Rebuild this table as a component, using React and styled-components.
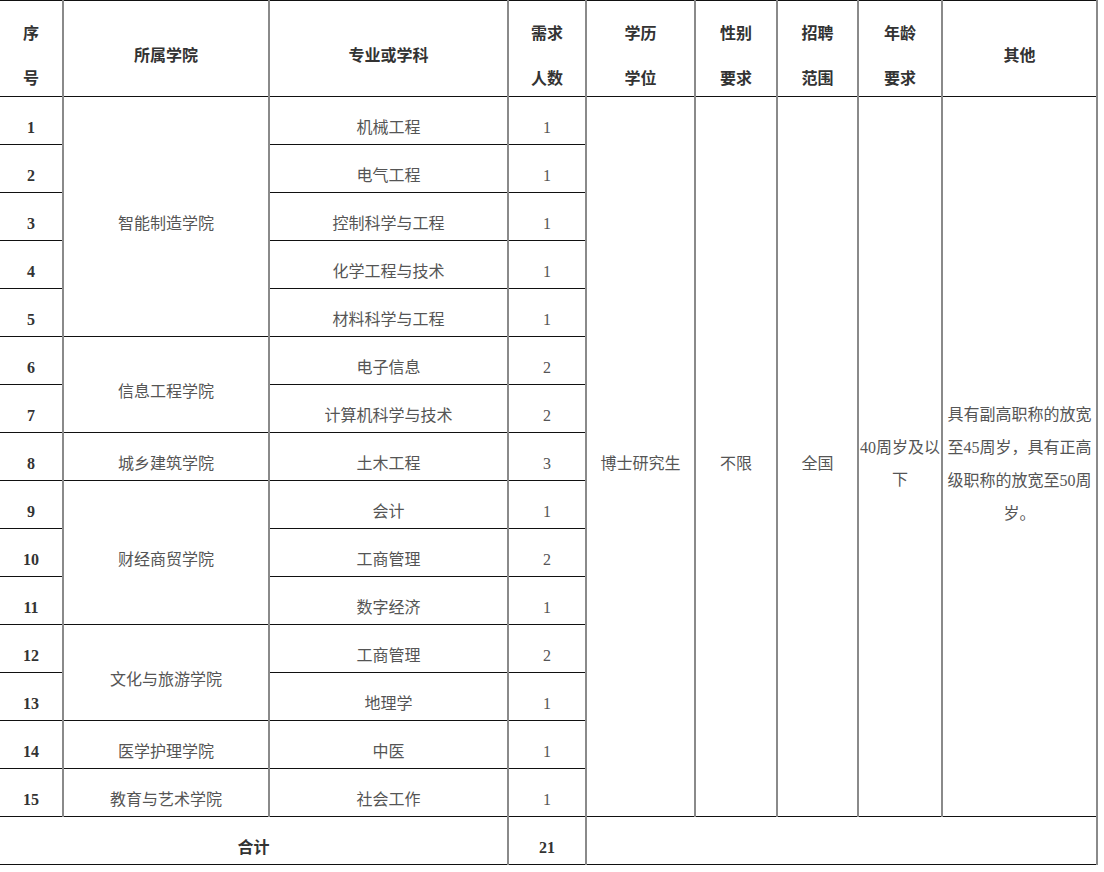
import React from "react";
import styled, { createGlobalStyle } from "styled-components";

const GlobalStyle = createGlobalStyle`
  html, body {
    margin: 0;
    padding: 0;
    background: #fff;
  }
  body {
    font-family: "Liberation Serif", "Noto Sans CJK SC", serif;
  }
`;

const columns = [63, 206, 239, 78, 109, 82, 81, 84, 155];

const groups = [
  {
    college: "智能制造学院",
    majors: [
      ["机械工程", 1],
      ["电气工程", 1],
      ["控制科学与工程", 1],
      ["化学工程与技术", 1],
      ["材料科学与工程", 1],
    ],
  },
  {
    college: "信息工程学院",
    majors: [
      ["电子信息", 2],
      ["计算机科学与技术", 2],
    ],
  },
  { college: "城乡建筑学院", majors: [["土木工程", 3]] },
  {
    college: "财经商贸学院",
    majors: [
      ["会计", 1],
      ["工商管理", 2],
      ["数字经济", 1],
    ],
  },
  {
    college: "文化与旅游学院",
    majors: [
      ["工商管理", 2],
      ["地理学", 1],
    ],
  },
  { college: "医学护理学院", majors: [["中医", 1]] },
  { college: "教育与艺术学院", majors: [["社会工作", 1]] },
];

const headers = [
  ["序", "号"],
  ["所属学院"],
  ["专业或学科"],
  ["需求", "人数"],
  ["学历", "学位"],
  ["性别", "要求"],
  ["招聘", "范围"],
  ["年龄", "要求"],
  ["其他"],
];

const Table = styled.table`
  width: 1097px;
  table-layout: fixed;
  border-collapse: collapse;
  font-size: 16px;
  color: #555;
`;

const HeadRow = styled.tr`
  height: 96px;
`;

const Row = styled.tr`
  height: 48px;
`;

const Cell = styled.td`
  border-top: 1px solid #111;
  border-bottom: 1px solid #111;
  border-left: 2px solid #8a8a8a;
  border-right: 2px solid #8a8a8a;
  padding: 14px ${(p) => (p.$tight ? 0 : 2)}px 0;
  text-align: center;
  vertical-align: middle;
  line-height: ${(p) => p.$lh || 33}px;
  font-weight: ${(p) => (p.$bold ? 700 : 400)};
  color: ${(p) => (p.$bold ? "#333" : "#555")};
  word-break: break-all;

  &:first-child {
    border-left: none;
  }
`;

const HeadCell = styled(Cell).attrs({ as: "th" })`
  font-weight: 700;
  color: #333;
`;

const HeadText = styled.div`
  height: 81px;
  display: flex;
  flex-direction: column;
  justify-content: center;
  line-height: 45px;
`;

export default function App() {
  let seq = 0;
  const rows = [];
  groups.forEach((g) => {
    g.majors.forEach(([major, count], mi) => {
      seq += 1;
      const first = seq === 1;
      rows.push(
        <Row key={seq}>
          <Cell $bold>{seq}</Cell>
          {mi === 0 && <Cell rowSpan={g.majors.length}>{g.college}</Cell>}
          <Cell>{major}</Cell>
          <Cell>{count}</Cell>
          {first && (
            <>
              <Cell rowSpan={15}>博士研究生</Cell>
              <Cell rowSpan={15}>不限</Cell>
              <Cell rowSpan={15}>全国</Cell>
              <Cell rowSpan={15} $lh={32} $tight>
                40周岁及以下
              </Cell>
              <Cell rowSpan={15} $tight>
                具有副高职称的放宽至45周岁，具有正高级职称的放宽至50周岁。
              </Cell>
            </>
          )}
        </Row>
      );
    });
  });

  return (
    <>
      <GlobalStyle />
      <Table>
        <colgroup>
          {columns.map((w, i) => (
            <col key={i} style={{ width: w }} />
          ))}
        </colgroup>
        <thead>
          <HeadRow>
            {headers.map((h, i) => (
              <HeadCell key={i}>
                <HeadText>
                  {h.map((line, j) => (
                    <span key={j}>{line}</span>
                  ))}
                </HeadText>
              </HeadCell>
            ))}
          </HeadRow>
        </thead>
        <tbody>
          {rows}
          <Row>
            <Cell colSpan={3} $bold>
              合计
            </Cell>
            <Cell $bold>21</Cell>
            <Cell colSpan={5} />
          </Row>
        </tbody>
      </Table>
    </>
  );
}
